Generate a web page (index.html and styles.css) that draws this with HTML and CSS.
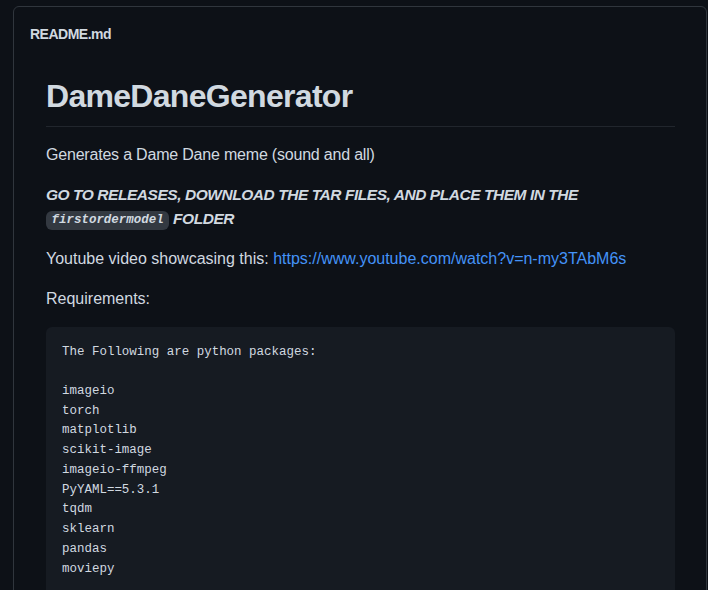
FILE: index.html
```html
<!DOCTYPE html>
<html lang="en">
<head>
<meta charset="utf-8">
<title>README.md</title>
<link rel="stylesheet" href="styles.css">
</head>
<body>
<div class="page">
  <div class="readme-box">
    <div class="readme-header">
      <h2 class="readme-title">README.md</h2>
    </div>
    <article class="markdown-body">
      <h1 class="md-h1">DameDaneGenerator</h1>
      <p class="md-p md-lead">Generates a Dame Dane meme (sound and all)</p>
      <p class="md-p"><strong class="md-strong"><em>GO TO RELEASES, DOWNLOAD THE TAR FILES, AND PLACE THEM IN THE <code class="md-code">firstordermodel</code> FOLDER</em></strong></p>
      <p class="md-p">Youtube video showcasing this: <a class="md-link" href="#">https://www.youtube.com/watch?v=n-my3TAbM6s</a></p>
      <p class="md-p">Requirements:</p>
      <pre class="md-pre"><code class="md-pre-code">The Following are python packages:

imageio
torch
matplotlib
scikit-image
imageio-ffmpeg
PyYAML==5.3.1
tqdm
sklearn
pandas
moviepy
</code></pre>
    </article>
  </div>
</div>
</body>
</html>
```

FILE: styles.css
```css
html, body {
  margin: 0;
  padding: 0;
  background: #0d1117;
  height: 100%;
  overflow: hidden;
}

body {
  color: #d1d9e0;
  font-family: "Segoe UI", "Liberation Sans", Arial, sans-serif;
  font-size: 16px;
  line-height: 1.5;
}

.page {
  padding: 6px 0 0 13px;
}

.readme-box {
  width: 694px;
  box-sizing: border-box;
  border: 1px solid #30363d;
  border-radius: 6px;
  min-height: 700px;
}

.readme-header {
  padding: 17px 16px 0 16px;
}

.readme-title {
  margin: 0;
  font-size: 14px;
  line-height: 21px;
  font-weight: 700;
  letter-spacing: -0.5px;
  color: #d1d9e0;
}

.markdown-body {
  padding: 31px 31px 32px 32px;
}

.md-h1 {
  margin: 0 0 16px 0;
  padding-bottom: 9.6px;
  border-bottom: 1px solid #21262d;
  font-size: 32px;
  line-height: 40px;
  font-weight: 700;
  letter-spacing: -0.7px;
  color: #d1d9e0;
}

.md-p {
  margin: 0 0 16px 0;
  line-height: 24px;
}

.md-lead {
  letter-spacing: -0.2px;
}

.md-strong {
  font-weight: 700;
  font-style: italic;
  font-size: 15.5px;
  letter-spacing: -0.45px;
  line-height: 1;
}

.md-code {
  font-family: "Liberation Mono", "DejaVu Sans Mono", monospace;
  font-size: 12.47px;
  line-height: 1;
  padding: 0.2em 0.44em;
  border-radius: 6px;
  background: rgba(110, 118, 129, 0.4);
  letter-spacing: 0;
  color: #d1d9e0;
}

.md-link {
  color: #4493f8;
  text-decoration: none;
}

.md-pre {
  margin: 0;
  padding: 16px;
  background: #161b22;
  border-radius: 6px;
  font-family: "Liberation Mono", "DejaVu Sans Mono", monospace;
  font-size: 12.47px;
  line-height: 19.72px;
  color: #d1d9e0;
  overflow: hidden;
}

.md-pre-code {
  font: inherit;
  line-height: inherit;
}
```
